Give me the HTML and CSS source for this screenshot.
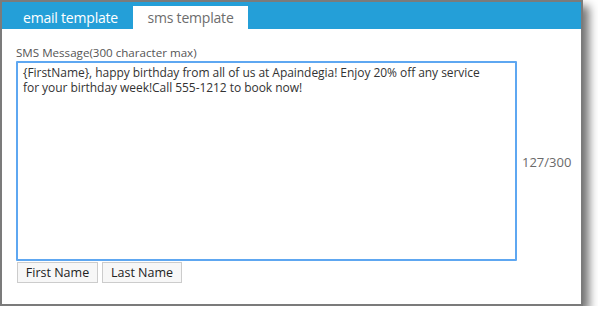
FILE: index.html
```html
<!DOCTYPE html>
<html>
<head>
<meta charset="utf-8">
<link rel="stylesheet" href="styles.css">
</head>
<body>
<div class="window">
  <div class="tabbar">
    <div class="tab tab-email">email template</div>
    <div class="tab tab-sms">sms template</div>
  </div>
  <div class="content">
    <div class="label">SMS Message(300 character max)</div>
    <div class="row">
      <textarea class="message">{FirstName}, happy birthday from all of us at Apaindegia! Enjoy 20% off any service
for your birthday week!Call 555-1212 to book now!</textarea>
      <div class="counter">127/300</div>
    </div>
    <div class="buttons">
      <button class="btn">First Name</button>
      <button class="btn">Last Name</button>
    </div>
  </div>
</div>
</body>
</html>
```
FILE: styles.css
```css
html, body {
  margin: 0;
  padding: 0;
  background: #ffffff;
}
body {
  font-family: "Open Sans", "Noto Sans", sans-serif;
}
.window {
  width: 579px;
  height: 302px;
  border: 2px solid #7b7b7b;
  background: #ffffff;
  box-shadow: 6px 6px 9px rgba(0, 0, 0, 0.55);
  display: flex;
  flex-direction: column;
}
.tabbar {
  height: 27px;
  background: #249fd8;
  display: flex;
  align-items: flex-end;
}
.tab {
  height: 23px;
  display: flex;
  align-items: center;
  justify-content: center;
  font-size: 14px;
  letter-spacing: -0.2px;
  padding-bottom: 1px;
  box-sizing: border-box;
}
.tab-email {
  width: 131px;
  color: #ffffff;
  padding-left: 6px;
}
.tab-sms {
  width: 115px;
  background: #ffffff;
  color: #6d6d6d;
}
.content {
  padding: 16px 0 0 14px;
  display: flex;
  flex-direction: column;
}
.label {
  font-size: 11.6px;
  color: #555555;
  line-height: 16px;
  height: 16px;
}
.row {
  display: flex;
  align-items: center;
}
.message {
  width: 501px;
  height: 200px;
  box-sizing: border-box;
  border: 2px solid #5ea7f1;
  border-radius: 1px;
  padding: 2px 5px;
  margin: 0;
  resize: none;
  font-family: "Open Sans", "Noto Sans", sans-serif;
  font-size: 12px;
  letter-spacing: -0.05px;
  line-height: 15px;
  color: #333333;
  outline: none;
  white-space: pre-wrap;
}
.counter {
  margin-left: 5px;
  font-size: 13px;
  color: #6a6a6a;
  padding-top: 2px;
}
.buttons {
  display: flex;
  gap: 4px;
  margin-top: 1px;
  padding-left: 1px;
}
.btn {
  height: 21px;
  padding: 0;
  margin: 0;
  border: 1px solid #cccccc;
  background: #f7f7f7;
  font-family: "Open Sans", "Noto Sans", sans-serif;
  font-size: 12.5px;
  color: #222222;
}
.btn:first-child { width: 81px; }
.btn:last-child { width: 80px; }
```
